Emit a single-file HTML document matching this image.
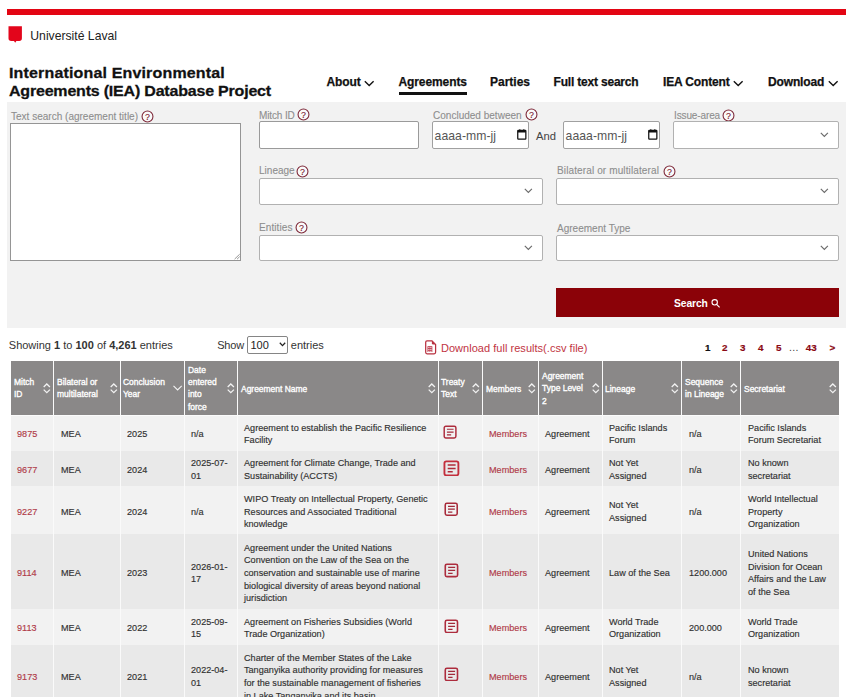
<!DOCTYPE html><html><head><meta charset="utf-8"><style>
*{margin:0;padding:0;box-sizing:border-box}
html,body{width:856px;height:697px;overflow:hidden;background:#fff}
body{position:relative;font-family:"Liberation Sans",sans-serif;color:#333}
.t{position:absolute;white-space:nowrap}
.a{position:absolute}
</style></head><body>
<div class="a" style="left:7px;top:9px;width:839px;height:6px;background:#e30513"></div>
<svg class="a" style="left:8px;top:26px" width="15" height="17" viewBox="0 0 15 17"><path d="M0.5 0.3 H13.9 V12.3 Q13.9 15.0 11.2 15.0 H8.4 L7.2 16.8 L6.0 15.0 H3.2 Q0.5 15.0 0.5 12.3 Z" fill="#e3051b"/></svg>
<div class="t" style="left:30.30px;top:29.05px;font-size:12.2px;line-height:14.64px;color:#222;font-weight:400;">Université Laval</div>
<div class="t" style="left:9.00px;top:62.56px;font-size:16px;line-height:19.2px;color:#111;font-weight:700;letter-spacing:0.16px;-webkit-text-stroke:0.3px #111;transform:scaleY(0.92);transform-origin:0 15.14px">International Environmental</div>
<div class="t" style="left:9.00px;top:81.46px;font-size:16px;line-height:19.2px;color:#111;font-weight:700;letter-spacing:-0.2px;-webkit-text-stroke:0.3px #111;transform:scaleY(0.92);transform-origin:0 15.14px">Agreements (IEA) Database Project</div>
<div class="t" style="left:326.50px;top:74.64px;font-size:12px;line-height:14.4px;color:#111;font-weight:700;-webkit-text-stroke:0.25px #111;letter-spacing:-0.1px">About</div>
<svg class="a" style="left:363.5px;top:80px" width="11" height="7" viewBox="0 0 11 7"><path d="M0.8 1.2 L5.2 5.6 L9.6 1.2" fill="none" stroke="#111" stroke-width="1.35"/></svg>
<div class="t" style="left:398.50px;top:74.64px;font-size:12px;line-height:14.4px;color:#111;font-weight:700;-webkit-text-stroke:0.25px #111;letter-spacing:-0.1px">Agreements</div>
<div class="a" style="left:398.5px;top:92px;width:68.5px;height:3px;background:#111"></div>
<div class="t" style="left:490.00px;top:74.64px;font-size:12px;line-height:14.4px;color:#111;font-weight:700;-webkit-text-stroke:0.25px #111">Parties</div>
<div class="t" style="left:553.60px;top:74.64px;font-size:12px;line-height:14.4px;color:#111;font-weight:700;-webkit-text-stroke:0.25px #111;letter-spacing:-0.2px">Full text search</div>
<div class="t" style="left:663.00px;top:74.64px;font-size:12px;line-height:14.4px;color:#111;font-weight:700;-webkit-text-stroke:0.25px #111;letter-spacing:-0.15px">IEA Content</div>
<svg class="a" style="left:732.5px;top:80px" width="11" height="7" viewBox="0 0 11 7"><path d="M0.8 1.2 L5.2 5.6 L9.6 1.2" fill="none" stroke="#111" stroke-width="1.35"/></svg>
<div class="t" style="left:768.00px;top:74.64px;font-size:12px;line-height:14.4px;color:#111;font-weight:700;-webkit-text-stroke:0.25px #111;letter-spacing:-0.15px">Download</div>
<svg class="a" style="left:827.5px;top:80px" width="11" height="7" viewBox="0 0 11 7"><path d="M0.8 1.2 L5.2 5.6 L9.6 1.2" fill="none" stroke="#111" stroke-width="1.35"/></svg>
<div class="a" style="left:7px;top:102px;width:839px;height:225.5px;background:#f2f2f2"></div>
<div class="t" style="left:10.60px;top:109.71px;font-size:11.4px;line-height:13.68px;color:#8e8e8e;font-weight:400;-webkit-text-stroke:0.12px #8e8e8e;transform:scaleX(0.88);transform-origin:0 0">Text search (agreement title)</div>
<svg class="a" style="left:140.6px;top:109.5px" width="13" height="13" viewBox="0 0 13 13"><circle cx="6.5" cy="6.5" r="5.45" fill="#fff" fill-opacity="0.6" stroke="#7f2a3a" stroke-width="1.1"/><text x="6.5" y="9.6" text-anchor="middle" font-family="Liberation Sans" font-weight="400" font-size="8.8" fill="#7a2434" stroke="#7a2434" stroke-width="0.15">?</text></svg>
<div class="a" style="left:10px;top:123px;width:231px;height:138px;background:#fff;border:1px solid #959595;border-radius:0px"></div>
<svg class="a" style="left:232px;top:252px" width="8" height="8" viewBox="0 0 8 8"><path d="M7.7 2.2 L2.6 7.1 M7.7 4.6 L5.1 7.1" stroke="#8a8a8a" stroke-width="0.9"/></svg>
<div class="t" style="left:259.40px;top:108.61px;font-size:11.4px;line-height:13.68px;color:#8e8e8e;font-weight:400;-webkit-text-stroke:0.12px #8e8e8e;transform:scaleX(0.88);transform-origin:0 0;letter-spacing:-0.15px">Mitch ID</div>
<svg class="a" style="left:297.3px;top:108.1px" width="13" height="13" viewBox="0 0 13 13"><circle cx="6.5" cy="6.5" r="5.45" fill="#fff" fill-opacity="0.6" stroke="#7f2a3a" stroke-width="1.1"/><text x="6.5" y="9.6" text-anchor="middle" font-family="Liberation Sans" font-weight="400" font-size="8.8" fill="#7a2434" stroke="#7a2434" stroke-width="0.15">?</text></svg>
<div class="a" style="left:259px;top:121px;width:159.5px;height:27.5px;background:#fff;border:1px solid #9a9a9a;border-radius:2px"></div>
<div class="t" style="left:432.60px;top:108.61px;font-size:11.4px;line-height:13.68px;color:#8e8e8e;font-weight:400;-webkit-text-stroke:0.12px #8e8e8e;transform:scaleX(0.88);transform-origin:0 0">Concluded between</div>
<svg class="a" style="left:524.9px;top:108.1px" width="13" height="13" viewBox="0 0 13 13"><circle cx="6.5" cy="6.5" r="5.45" fill="#fff" fill-opacity="0.6" stroke="#7f2a3a" stroke-width="1.1"/><text x="6.5" y="9.6" text-anchor="middle" font-family="Liberation Sans" font-weight="400" font-size="8.8" fill="#7a2434" stroke="#7a2434" stroke-width="0.15">?</text></svg>
<div class="a" style="left:432.2px;top:121px;width:97.30000000000001px;height:27.5px;background:#fff;border:1px solid #a0a0a0;border-radius:2px"></div>
<div class="t" style="left:434.60px;top:128.75px;font-size:12.2px;line-height:14.64px;color:#555;font-weight:400;letter-spacing:0.05px">aaaa-mm-jj</div>
<svg class="a" style="left:516.8px;top:129.3px" width="10" height="11" viewBox="0 0 10 11"><rect x="0.75" y="1.4" width="8.1" height="8.7" rx="0.6" fill="none" stroke="#111" stroke-width="1.25"/><rect x="0.75" y="1.4" width="8.1" height="2.1" fill="#111"/><rect x="2.2" y="0.3" width="1.2" height="1.4" fill="#111"/><rect x="6.2" y="0.3" width="1.2" height="1.4" fill="#111"/></svg>
<div class="t" style="left:536.00px;top:129.90px;font-size:11.2px;line-height:13.44px;color:#444;font-weight:400;">And</div>
<div class="a" style="left:563.1px;top:121px;width:96.89999999999998px;height:27.5px;background:#fff;border:1px solid #a0a0a0;border-radius:2px"></div>
<div class="t" style="left:565.60px;top:128.75px;font-size:12.2px;line-height:14.64px;color:#555;font-weight:400;letter-spacing:0.05px">aaaa-mm-jj</div>
<svg class="a" style="left:647.8px;top:129.3px" width="10" height="11" viewBox="0 0 10 11"><rect x="0.75" y="1.4" width="8.1" height="8.7" rx="0.6" fill="none" stroke="#111" stroke-width="1.25"/><rect x="0.75" y="1.4" width="8.1" height="2.1" fill="#111"/><rect x="2.2" y="0.3" width="1.2" height="1.4" fill="#111"/><rect x="6.2" y="0.3" width="1.2" height="1.4" fill="#111"/></svg>
<div class="t" style="left:673.50px;top:108.61px;font-size:11.4px;line-height:13.68px;color:#8e8e8e;font-weight:400;-webkit-text-stroke:0.12px #8e8e8e;transform:scaleX(0.88);transform-origin:0 0;letter-spacing:-0.15px">Issue-area</div>
<svg class="a" style="left:721.6px;top:108.7px" width="13" height="13" viewBox="0 0 13 13"><circle cx="6.5" cy="6.5" r="5.45" fill="#fff" fill-opacity="0.6" stroke="#7f2a3a" stroke-width="1.1"/><text x="6.5" y="9.6" text-anchor="middle" font-family="Liberation Sans" font-weight="400" font-size="8.8" fill="#7a2434" stroke="#7a2434" stroke-width="0.15">?</text></svg>
<div class="a" style="left:673.2px;top:121px;width:165.79999999999995px;height:27.5px;background:#fff;border:1px solid #b1b1b1;border-radius:2px"></div>
<svg class="a" style="left:820.00px;top:132.10px" width="9" height="6" viewBox="0 0 9 6"><path d="M0.8 0.9 L4.35 4.4 L7.9 0.9" fill="none" stroke="#6a6a6a" stroke-width="1.15"/></svg>
<div class="t" style="left:259.40px;top:164.11px;font-size:11.4px;line-height:13.68px;color:#8e8e8e;font-weight:400;-webkit-text-stroke:0.12px #8e8e8e;transform:scaleX(0.88);transform-origin:0 0">Lineage</div>
<svg class="a" style="left:296.2px;top:165.0px" width="13" height="13" viewBox="0 0 13 13"><circle cx="6.5" cy="6.5" r="5.45" fill="#fff" fill-opacity="0.6" stroke="#7f2a3a" stroke-width="1.1"/><text x="6.5" y="9.6" text-anchor="middle" font-family="Liberation Sans" font-weight="400" font-size="8.8" fill="#7a2434" stroke="#7a2434" stroke-width="0.15">?</text></svg>
<div class="a" style="left:259px;top:178px;width:283.5px;height:27px;background:#fff;border:1px solid #b1b1b1;border-radius:2px"></div>
<svg class="a" style="left:523.50px;top:188.10px" width="9" height="6" viewBox="0 0 9 6"><path d="M0.8 0.9 L4.35 4.4 L7.9 0.9" fill="none" stroke="#6a6a6a" stroke-width="1.15"/></svg>
<div class="t" style="left:556.50px;top:164.11px;font-size:11.4px;line-height:13.68px;color:#8e8e8e;font-weight:400;-webkit-text-stroke:0.12px #8e8e8e;transform:scaleX(0.88);transform-origin:0 0;letter-spacing:0.13px">Bilateral or multilateral</div>
<svg class="a" style="left:662.6px;top:164.7px" width="13" height="13" viewBox="0 0 13 13"><circle cx="6.5" cy="6.5" r="5.45" fill="#fff" fill-opacity="0.6" stroke="#7f2a3a" stroke-width="1.1"/><text x="6.5" y="9.6" text-anchor="middle" font-family="Liberation Sans" font-weight="400" font-size="8.8" fill="#7a2434" stroke="#7a2434" stroke-width="0.15">?</text></svg>
<div class="a" style="left:555.8px;top:178px;width:283.20000000000005px;height:27px;background:#fff;border:1px solid #b1b1b1;border-radius:2px"></div>
<svg class="a" style="left:820.00px;top:188.10px" width="9" height="6" viewBox="0 0 9 6"><path d="M0.8 0.9 L4.35 4.4 L7.9 0.9" fill="none" stroke="#6a6a6a" stroke-width="1.15"/></svg>
<div class="t" style="left:259.40px;top:221.11px;font-size:11.4px;line-height:13.68px;color:#8e8e8e;font-weight:400;-webkit-text-stroke:0.12px #8e8e8e;transform:scaleX(0.88);transform-origin:0 0;letter-spacing:0.1px">Entities</div>
<svg class="a" style="left:295.2px;top:220.9px" width="13" height="13" viewBox="0 0 13 13"><circle cx="6.5" cy="6.5" r="5.45" fill="#fff" fill-opacity="0.6" stroke="#7f2a3a" stroke-width="1.1"/><text x="6.5" y="9.6" text-anchor="middle" font-family="Liberation Sans" font-weight="400" font-size="8.8" fill="#7a2434" stroke="#7a2434" stroke-width="0.15">?</text></svg>
<div class="a" style="left:259px;top:234.5px;width:283.5px;height:26.5px;background:#fff;border:1px solid #b1b1b1;border-radius:2px"></div>
<svg class="a" style="left:523.50px;top:244.50px" width="9" height="6" viewBox="0 0 9 6"><path d="M0.8 0.9 L4.35 4.4 L7.9 0.9" fill="none" stroke="#6a6a6a" stroke-width="1.15"/></svg>
<div class="t" style="left:556.50px;top:221.51px;font-size:11.4px;line-height:13.68px;color:#8e8e8e;font-weight:400;-webkit-text-stroke:0.12px #8e8e8e;transform:scaleX(0.88);transform-origin:0 0">Agreement Type</div>
<div class="a" style="left:555.8px;top:234.5px;width:283.20000000000005px;height:26.5px;background:#fff;border:1px solid #b1b1b1;border-radius:2px"></div>
<svg class="a" style="left:820.00px;top:244.50px" width="9" height="6" viewBox="0 0 9 6"><path d="M0.8 0.9 L4.35 4.4 L7.9 0.9" fill="none" stroke="#6a6a6a" stroke-width="1.15"/></svg>
<div class="a" style="left:556px;top:288px;width:283px;height:29px;background:#8b0208"></div>
<div class="t" style="left:674.00px;top:297.75px;font-size:10.3px;line-height:12.36px;color:#fff;font-weight:700;letter-spacing:-0.1px">Search</div>
<svg class="a" style="left:710.5px;top:299px" width="10" height="9" viewBox="0 0 10 9"><circle cx="3.7" cy="3.3" r="2.7" fill="none" stroke="#fff" stroke-width="1.1"/><path d="M5.6 5.3 L8.6 8.3" stroke="#fff" stroke-width="1.2"/></svg>
<div class="t" style="left:8.80px;top:338.99px;font-size:11px;line-height:13.2px;color:#333;font-weight:400;">Showing <b>1</b> to <b>100</b> of <b>4,261</b> entries</div>
<div class="t" style="left:217.20px;top:338.59px;font-size:11px;line-height:13.2px;color:#333;font-weight:400;letter-spacing:-0.2px">Show</div>
<div class="a" style="left:247.3px;top:336.3px;width:40.3px;height:17.4px;background:#fff;border:1px solid #858585;border-radius:2px"></div>
<div class="t" style="left:250.50px;top:338.89px;font-size:11px;line-height:13.2px;color:#222;font-weight:400;">100</div>
<svg class="a" style="left:279px;top:342px" width="7" height="5" viewBox="0 0 7 5"><path d="M0.8 0.8 L3.5 3.6 L6.2 0.8" fill="none" stroke="#222" stroke-width="1.3"/></svg>
<div class="t" style="left:290.80px;top:338.59px;font-size:11px;line-height:13.2px;color:#333;font-weight:400;">entries</div>
<svg class="a" style="left:424.8px;top:339.8px" width="12" height="15" viewBox="0 0 12 15"><path d="M2 0.8 H7 L10.6 4.4 V12.3 Q10.6 13.8 9.1 13.8 H2 Q0.7 13.8 0.7 12.3 V2.2 Q0.7 0.8 2 0.8 Z" fill="none" stroke="#b8303f" stroke-width="1.25"/><path d="M6.9 0.8 V3.2 Q6.9 4.4 8.1 4.4 H10.6 Z" fill="#b8303f"/><path d="M2.9 6.3 V12 M4.9 6.3 V12 M6.9 6.3 V12 M2.9 6.6 H6.9 M2.9 8.5 H6.9 M2.9 10.4 H6.9" stroke="#c04050" stroke-width="0.9"/></svg>
<div class="t" style="left:441.00px;top:341.79px;font-size:11px;line-height:13.2px;color:#c1343f;font-weight:400;letter-spacing:0.03px">Download full results(.csv file)</div>
<div class="t" style="left:705.00px;top:342.22px;font-size:9.8px;line-height:11.76px;color:#111;font-weight:700;-webkit-text-stroke:0.2px #111">1</div>
<div class="t" style="left:722.00px;top:342.22px;font-size:9.8px;line-height:11.76px;color:#8b0a14;font-weight:700;-webkit-text-stroke:0.2px #8b0a14">2</div>
<div class="t" style="left:740.00px;top:342.22px;font-size:9.8px;line-height:11.76px;color:#8b0a14;font-weight:700;-webkit-text-stroke:0.2px #8b0a14">3</div>
<div class="t" style="left:758.00px;top:342.22px;font-size:9.8px;line-height:11.76px;color:#8b0a14;font-weight:700;-webkit-text-stroke:0.2px #8b0a14">4</div>
<div class="t" style="left:776.00px;top:342.22px;font-size:9.8px;line-height:11.76px;color:#8b0a14;font-weight:700;-webkit-text-stroke:0.2px #8b0a14">5</div>
<div class="t" style="left:805.80px;top:342.22px;font-size:9.8px;line-height:11.76px;color:#8b0a14;font-weight:700;-webkit-text-stroke:0.2px #8b0a14">43</div>
<div class="t" style="left:829.60px;top:342.22px;font-size:9.8px;line-height:11.76px;color:#8b0a14;font-weight:700;-webkit-text-stroke:0.2px #8b0a14">&gt;</div>
<div class="t" style="left:789.00px;top:341.36px;font-size:10.5px;line-height:12.6px;color:#444;font-weight:400;letter-spacing:0.3px">...</div>
<div class="a" style="left:10.6px;top:361px;width:828.4px;height:53.60000000000002px;background:#8a8888"></div>
<div class="a" style="left:10.6px;top:414.5px;width:828.4px;height:36.30000000000001px;background:#f2f2f2"></div>
<div class="a" style="left:10.6px;top:450.8px;width:828.4px;height:35.25px;background:#e9e9e9"></div>
<div class="a" style="left:10.6px;top:486.05px;width:828.4px;height:48.349999999999966px;background:#f2f2f2"></div>
<div class="a" style="left:10.6px;top:534.4px;width:828.4px;height:74.60000000000002px;background:#e9e9e9"></div>
<div class="a" style="left:10.6px;top:609px;width:828.4px;height:35.799999999999955px;background:#f2f2f2"></div>
<div class="a" style="left:10.6px;top:644.8px;width:828.4px;height:61.200000000000045px;background:#e9e9e9"></div>
<div class="a" style="left:10.6px;top:414.8px;width:828.4px;height:1px;background:#fbfbfb"></div>
<div class="a" style="left:53.2px;top:361px;width:1px;height:339px;background:#fafafa"></div>
<div class="a" style="left:119.60000000000001px;top:361px;width:1px;height:339px;background:#fafafa"></div>
<div class="a" style="left:184.1px;top:361px;width:1px;height:339px;background:#fafafa"></div>
<div class="a" style="left:237.1px;top:361px;width:1px;height:339px;background:#fafafa"></div>
<div class="a" style="left:437.7px;top:361px;width:1px;height:339px;background:#fafafa"></div>
<div class="a" style="left:482.0px;top:361px;width:1px;height:339px;background:#fafafa"></div>
<div class="a" style="left:538.0px;top:361px;width:1px;height:339px;background:#fafafa"></div>
<div class="a" style="left:601.6px;top:361px;width:1px;height:339px;background:#fafafa"></div>
<div class="a" style="left:681.2px;top:361px;width:1px;height:339px;background:#fafafa"></div>
<div class="a" style="left:740.4000000000001px;top:361px;width:1px;height:339px;background:#fafafa"></div>
<div class="t" style="left:13.80px;top:376.20px;font-size:9.1px;line-height:12.2px;color:#fff;font-weight:400;transform:scaleX(0.93);transform-origin:0 0;-webkit-text-stroke:0.35px #fff">Mitch<br>ID</div>
<svg class="a" style="left:43.2px;top:382.8px" width="8" height="11" viewBox="0 0 8 11"><path d="M0.7 4.0 L3.8 1.0 L6.9 4.0 M0.7 6.6 L3.8 9.6 L6.9 6.6" fill="none" stroke="#f2f2f2" stroke-width="1.3"/></svg>
<div class="t" style="left:56.70px;top:376.20px;font-size:9.1px;line-height:12.2px;color:#fff;font-weight:400;transform:scaleX(0.93);transform-origin:0 0;-webkit-text-stroke:0.35px #fff">Bilateral or<br>multilateral</div>
<svg class="a" style="left:109.60000000000001px;top:382.8px" width="8" height="11" viewBox="0 0 8 11"><path d="M0.7 4.0 L3.8 1.0 L6.9 4.0 M0.7 6.6 L3.8 9.6 L6.9 6.6" fill="none" stroke="#f2f2f2" stroke-width="1.3"/></svg>
<div class="t" style="left:123.10px;top:376.20px;font-size:9.1px;line-height:12.2px;color:#fff;font-weight:400;transform:scaleX(0.93);transform-origin:0 0;-webkit-text-stroke:0.35px #fff">Conclusion<br>Year</div>
<svg class="a" style="left:173.1px;top:385.4px" width="10" height="6" viewBox="0 0 10 6"><path d="M0.5 0.8 L4.6 4.9 L8.7 0.8" fill="none" stroke="#f4f4f4" stroke-width="1.1"/></svg>
<div class="t" style="left:187.60px;top:364.00px;font-size:9.1px;line-height:12.2px;color:#fff;font-weight:400;transform:scaleX(0.93);transform-origin:0 0;-webkit-text-stroke:0.35px #fff">Date<br>entered<br>into<br>force</div>
<svg class="a" style="left:227.1px;top:382.8px" width="8" height="11" viewBox="0 0 8 11"><path d="M0.7 4.0 L3.8 1.0 L6.9 4.0 M0.7 6.6 L3.8 9.6 L6.9 6.6" fill="none" stroke="#f2f2f2" stroke-width="1.3"/></svg>
<div class="t" style="left:240.60px;top:383.10px;font-size:9.1px;line-height:12.2px;color:#fff;font-weight:400;transform:scaleX(0.93);transform-origin:0 0;-webkit-text-stroke:0.35px #fff">Agreement Name</div>
<svg class="a" style="left:427.7px;top:382.8px" width="8" height="11" viewBox="0 0 8 11"><path d="M0.7 4.0 L3.8 1.0 L6.9 4.0 M0.7 6.6 L3.8 9.6 L6.9 6.6" fill="none" stroke="#f2f2f2" stroke-width="1.3"/></svg>
<div class="t" style="left:441.20px;top:376.20px;font-size:9.1px;line-height:12.2px;color:#fff;font-weight:400;transform:scaleX(0.93);transform-origin:0 0;-webkit-text-stroke:0.35px #fff">Treaty<br>Text</div>
<svg class="a" style="left:472.0px;top:382.8px" width="8" height="11" viewBox="0 0 8 11"><path d="M0.7 4.0 L3.8 1.0 L6.9 4.0 M0.7 6.6 L3.8 9.6 L6.9 6.6" fill="none" stroke="#f2f2f2" stroke-width="1.3"/></svg>
<div class="t" style="left:485.50px;top:383.10px;font-size:9.1px;line-height:12.2px;color:#fff;font-weight:400;transform:scaleX(0.93);transform-origin:0 0;-webkit-text-stroke:0.35px #fff">Members</div>
<svg class="a" style="left:528.0px;top:382.8px" width="8" height="11" viewBox="0 0 8 11"><path d="M0.7 4.0 L3.8 1.0 L6.9 4.0 M0.7 6.6 L3.8 9.6 L6.9 6.6" fill="none" stroke="#f2f2f2" stroke-width="1.3"/></svg>
<div class="t" style="left:541.50px;top:370.10px;font-size:9.1px;line-height:12.2px;color:#fff;font-weight:400;transform:scaleX(0.93);transform-origin:0 0;-webkit-text-stroke:0.35px #fff">Agreement<br>Type Level<br>2</div>
<svg class="a" style="left:591.6px;top:382.8px" width="8" height="11" viewBox="0 0 8 11"><path d="M0.7 4.0 L3.8 1.0 L6.9 4.0 M0.7 6.6 L3.8 9.6 L6.9 6.6" fill="none" stroke="#f2f2f2" stroke-width="1.3"/></svg>
<div class="t" style="left:605.10px;top:383.10px;font-size:9.1px;line-height:12.2px;color:#fff;font-weight:400;transform:scaleX(0.93);transform-origin:0 0;-webkit-text-stroke:0.35px #fff">Lineage</div>
<svg class="a" style="left:671.2px;top:382.8px" width="8" height="11" viewBox="0 0 8 11"><path d="M0.7 4.0 L3.8 1.0 L6.9 4.0 M0.7 6.6 L3.8 9.6 L6.9 6.6" fill="none" stroke="#f2f2f2" stroke-width="1.3"/></svg>
<div class="t" style="left:684.70px;top:376.20px;font-size:9.1px;line-height:12.2px;color:#fff;font-weight:400;transform:scaleX(0.93);transform-origin:0 0;-webkit-text-stroke:0.35px #fff">Sequence<br>in Lineage</div>
<svg class="a" style="left:730.4000000000001px;top:382.8px" width="8" height="11" viewBox="0 0 8 11"><path d="M0.7 4.0 L3.8 1.0 L6.9 4.0 M0.7 6.6 L3.8 9.6 L6.9 6.6" fill="none" stroke="#f2f2f2" stroke-width="1.3"/></svg>
<div class="t" style="left:743.90px;top:383.10px;font-size:9.1px;line-height:12.2px;color:#fff;font-weight:400;transform:scaleX(0.93);transform-origin:0 0;-webkit-text-stroke:0.35px #fff">Secretariat</div>
<svg class="a" style="left:828.7px;top:382.8px" width="8" height="11" viewBox="0 0 8 11"><path d="M0.7 4.0 L3.8 1.0 L6.9 4.0 M0.7 6.6 L3.8 9.6 L6.9 6.6" fill="none" stroke="#f2f2f2" stroke-width="1.3"/></svg>
<div class="t" style="left:16.50px;top:427.95px;font-size:9.8px;line-height:12.6px;color:#b03a48;font-weight:400;transform:scaleX(0.93);transform-origin:0 0;-webkit-text-stroke:0.15px currentColor">9875</div>
<div class="t" style="left:61.10px;top:427.95px;font-size:9.8px;line-height:12.6px;color:#303030;font-weight:400;transform:scaleX(0.93);transform-origin:0 0;-webkit-text-stroke:0.15px currentColor">MEA</div>
<div class="t" style="left:127.40px;top:427.95px;font-size:9.8px;line-height:12.6px;color:#303030;font-weight:400;transform:scaleX(0.93);transform-origin:0 0;-webkit-text-stroke:0.15px currentColor">2025</div>
<div class="t" style="left:191.10px;top:427.95px;font-size:9.8px;line-height:12.6px;color:#303030;font-weight:400;transform:scaleX(0.93);transform-origin:0 0;-webkit-text-stroke:0.15px currentColor">n/a</div>
<div class="t" style="left:244.10px;top:421.65px;font-size:9.8px;line-height:12.6px;color:#303030;font-weight:400;transform:scaleX(0.93);transform-origin:0 0;-webkit-text-stroke:0.15px currentColor">Agreement to establish the Pacific Resilience<br>Facility</div>
<svg class="a" style="left:443.25px;top:425.35px" width="14.11" height="14.11" viewBox="0 0 14 14"><rect x="1.2" y="1.2" width="11.6" height="11.6" rx="1.6" fill="none" stroke="#ad2c3d" stroke-width="1.45"/><path d="M3.9 4.2 H10.5 M3.9 7.0 H10.5 M3.9 9.8 H8.1" stroke="#a32a3a" stroke-width="1.2"/></svg>
<div class="t" style="left:489.00px;top:427.95px;font-size:9.8px;line-height:12.6px;color:#b03a48;font-weight:400;transform:scaleX(0.93);transform-origin:0 0;-webkit-text-stroke:0.15px currentColor">Members</div>
<div class="t" style="left:545.00px;top:427.95px;font-size:9.8px;line-height:12.6px;color:#303030;font-weight:400;transform:scaleX(0.93);transform-origin:0 0;-webkit-text-stroke:0.15px currentColor">Agreement</div>
<div class="t" style="left:608.60px;top:421.65px;font-size:9.8px;line-height:12.6px;color:#303030;font-weight:400;transform:scaleX(0.93);transform-origin:0 0;-webkit-text-stroke:0.15px currentColor">Pacific Islands<br>Forum</div>
<div class="t" style="left:689.20px;top:427.95px;font-size:9.8px;line-height:12.6px;color:#303030;font-weight:400;transform:scaleX(0.93);transform-origin:0 0;-webkit-text-stroke:0.15px currentColor">n/a</div>
<div class="t" style="left:747.60px;top:421.65px;font-size:9.8px;line-height:12.6px;color:#303030;font-weight:400;transform:scaleX(0.93);transform-origin:0 0;-webkit-text-stroke:0.15px currentColor">Pacific Islands<br>Forum Secretariat</div>
<div class="t" style="left:16.50px;top:463.73px;font-size:9.8px;line-height:12.6px;color:#b03a48;font-weight:400;transform:scaleX(0.93);transform-origin:0 0;-webkit-text-stroke:0.15px currentColor">9677</div>
<div class="t" style="left:61.10px;top:463.73px;font-size:9.8px;line-height:12.6px;color:#303030;font-weight:400;transform:scaleX(0.93);transform-origin:0 0;-webkit-text-stroke:0.15px currentColor">MEA</div>
<div class="t" style="left:127.40px;top:463.73px;font-size:9.8px;line-height:12.6px;color:#303030;font-weight:400;transform:scaleX(0.93);transform-origin:0 0;-webkit-text-stroke:0.15px currentColor">2024</div>
<div class="t" style="left:191.10px;top:457.43px;font-size:9.8px;line-height:12.6px;color:#303030;font-weight:400;transform:scaleX(0.93);transform-origin:0 0;-webkit-text-stroke:0.15px currentColor">2025-07-<br>01</div>
<div class="t" style="left:244.10px;top:457.43px;font-size:9.8px;line-height:12.6px;color:#303030;font-weight:400;transform:scaleX(0.93);transform-origin:0 0;-webkit-text-stroke:0.15px currentColor">Agreement for Climate Change, Trade and<br>Sustainability (ACCTS)</div>
<svg class="a" style="left:443.18px;top:459.58px" width="16.84" height="16.84" viewBox="0 0 14 14"><rect x="1.2" y="1.2" width="11.6" height="11.6" rx="1.6" fill="none" stroke="#c32e3c" stroke-width="1.55"/><path d="M3.9 4.2 H10.5 M3.9 7.0 H10.5 M3.9 9.8 H8.1" stroke="#b02a38" stroke-width="1.2"/></svg>
<div class="t" style="left:489.00px;top:463.73px;font-size:9.8px;line-height:12.6px;color:#b03a48;font-weight:400;transform:scaleX(0.93);transform-origin:0 0;-webkit-text-stroke:0.15px currentColor">Members</div>
<div class="t" style="left:545.00px;top:463.73px;font-size:9.8px;line-height:12.6px;color:#303030;font-weight:400;transform:scaleX(0.93);transform-origin:0 0;-webkit-text-stroke:0.15px currentColor">Agreement</div>
<div class="t" style="left:608.60px;top:457.43px;font-size:9.8px;line-height:12.6px;color:#303030;font-weight:400;transform:scaleX(0.93);transform-origin:0 0;-webkit-text-stroke:0.15px currentColor">Not Yet<br>Assigned</div>
<div class="t" style="left:689.20px;top:463.73px;font-size:9.8px;line-height:12.6px;color:#303030;font-weight:400;transform:scaleX(0.93);transform-origin:0 0;-webkit-text-stroke:0.15px currentColor">n/a</div>
<div class="t" style="left:747.60px;top:457.43px;font-size:9.8px;line-height:12.6px;color:#303030;font-weight:400;transform:scaleX(0.93);transform-origin:0 0;-webkit-text-stroke:0.15px currentColor">No known<br>secretariat</div>
<div class="t" style="left:16.50px;top:505.53px;font-size:9.8px;line-height:12.6px;color:#b03a48;font-weight:400;transform:scaleX(0.93);transform-origin:0 0;-webkit-text-stroke:0.15px currentColor">9227</div>
<div class="t" style="left:61.10px;top:505.53px;font-size:9.8px;line-height:12.6px;color:#303030;font-weight:400;transform:scaleX(0.93);transform-origin:0 0;-webkit-text-stroke:0.15px currentColor">MEA</div>
<div class="t" style="left:127.40px;top:505.53px;font-size:9.8px;line-height:12.6px;color:#303030;font-weight:400;transform:scaleX(0.93);transform-origin:0 0;-webkit-text-stroke:0.15px currentColor">2024</div>
<div class="t" style="left:191.10px;top:505.53px;font-size:9.8px;line-height:12.6px;color:#303030;font-weight:400;transform:scaleX(0.93);transform-origin:0 0;-webkit-text-stroke:0.15px currentColor">n/a</div>
<div class="t" style="left:244.10px;top:492.93px;font-size:9.8px;line-height:12.6px;color:#303030;font-weight:400;transform:scaleX(0.93);transform-origin:0 0;-webkit-text-stroke:0.15px currentColor">WIPO Treaty on Intellectual Property, Genetic<br>Resources and Associated Traditional<br>knowledge</div>
<svg class="a" style="left:444.28px;top:502.28px" width="14.44" height="14.44" viewBox="0 0 14 14"><rect x="1.2" y="1.2" width="11.6" height="11.6" rx="1.6" fill="none" stroke="#a82a3a" stroke-width="1.5"/><path d="M3.9 4.2 H10.5 M3.9 7.0 H10.5 M3.9 9.8 H8.1" stroke="#9e2838" stroke-width="1.2"/></svg>
<div class="t" style="left:489.00px;top:505.53px;font-size:9.8px;line-height:12.6px;color:#b03a48;font-weight:400;transform:scaleX(0.93);transform-origin:0 0;-webkit-text-stroke:0.15px currentColor">Members</div>
<div class="t" style="left:545.00px;top:505.53px;font-size:9.8px;line-height:12.6px;color:#303030;font-weight:400;transform:scaleX(0.93);transform-origin:0 0;-webkit-text-stroke:0.15px currentColor">Agreement</div>
<div class="t" style="left:608.60px;top:499.23px;font-size:9.8px;line-height:12.6px;color:#303030;font-weight:400;transform:scaleX(0.93);transform-origin:0 0;-webkit-text-stroke:0.15px currentColor">Not Yet<br>Assigned</div>
<div class="t" style="left:689.20px;top:505.53px;font-size:9.8px;line-height:12.6px;color:#303030;font-weight:400;transform:scaleX(0.93);transform-origin:0 0;-webkit-text-stroke:0.15px currentColor">n/a</div>
<div class="t" style="left:747.60px;top:492.93px;font-size:9.8px;line-height:12.6px;color:#303030;font-weight:400;transform:scaleX(0.93);transform-origin:0 0;-webkit-text-stroke:0.15px currentColor">World Intellectual<br>Property<br>Organization</div>
<div class="t" style="left:16.50px;top:567.00px;font-size:9.8px;line-height:12.6px;color:#b03a48;font-weight:400;transform:scaleX(0.93);transform-origin:0 0;-webkit-text-stroke:0.15px currentColor">9114</div>
<div class="t" style="left:61.10px;top:567.00px;font-size:9.8px;line-height:12.6px;color:#303030;font-weight:400;transform:scaleX(0.93);transform-origin:0 0;-webkit-text-stroke:0.15px currentColor">MEA</div>
<div class="t" style="left:127.40px;top:567.00px;font-size:9.8px;line-height:12.6px;color:#303030;font-weight:400;transform:scaleX(0.93);transform-origin:0 0;-webkit-text-stroke:0.15px currentColor">2023</div>
<div class="t" style="left:191.10px;top:560.70px;font-size:9.8px;line-height:12.6px;color:#303030;font-weight:400;transform:scaleX(0.93);transform-origin:0 0;-webkit-text-stroke:0.15px currentColor">2026-01-<br>17</div>
<div class="t" style="left:244.10px;top:541.80px;font-size:9.8px;line-height:12.6px;color:#303030;font-weight:400;transform:scaleX(0.93);transform-origin:0 0;-webkit-text-stroke:0.15px currentColor">Agreement under the United Nations<br>Convention on the Law of the Sea on the<br>conservation and sustainable use of marine<br>biological diversity of areas beyond national<br>jurisdiction</div>
<svg class="a" style="left:444.16px;top:563.36px" width="14.88" height="14.88" viewBox="0 0 14 14"><rect x="1.2" y="1.2" width="11.6" height="11.6" rx="1.6" fill="none" stroke="#ad2c3d" stroke-width="1.5"/><path d="M3.9 4.2 H10.5 M3.9 7.0 H10.5 M3.9 9.8 H8.1" stroke="#a32a3a" stroke-width="1.2"/></svg>
<div class="t" style="left:489.00px;top:567.00px;font-size:9.8px;line-height:12.6px;color:#b03a48;font-weight:400;transform:scaleX(0.93);transform-origin:0 0;-webkit-text-stroke:0.15px currentColor">Members</div>
<div class="t" style="left:545.00px;top:567.00px;font-size:9.8px;line-height:12.6px;color:#303030;font-weight:400;transform:scaleX(0.93);transform-origin:0 0;-webkit-text-stroke:0.15px currentColor">Agreement</div>
<div class="t" style="left:608.60px;top:567.00px;font-size:9.8px;line-height:12.6px;color:#303030;font-weight:400;transform:scaleX(0.93);transform-origin:0 0;-webkit-text-stroke:0.15px currentColor">Law of the Sea</div>
<div class="t" style="left:689.20px;top:567.00px;font-size:9.8px;line-height:12.6px;color:#303030;font-weight:400;transform:scaleX(0.93);transform-origin:0 0;-webkit-text-stroke:0.15px currentColor">1200.000</div>
<div class="t" style="left:747.60px;top:548.10px;font-size:9.8px;line-height:12.6px;color:#303030;font-weight:400;transform:scaleX(0.93);transform-origin:0 0;-webkit-text-stroke:0.15px currentColor">United Nations<br>Division for Ocean<br>Affairs and the Law<br>of the Sea</div>
<div class="t" style="left:16.50px;top:622.20px;font-size:9.8px;line-height:12.6px;color:#b03a48;font-weight:400;transform:scaleX(0.93);transform-origin:0 0;-webkit-text-stroke:0.15px currentColor">9113</div>
<div class="t" style="left:61.10px;top:622.20px;font-size:9.8px;line-height:12.6px;color:#303030;font-weight:400;transform:scaleX(0.93);transform-origin:0 0;-webkit-text-stroke:0.15px currentColor">MEA</div>
<div class="t" style="left:127.40px;top:622.20px;font-size:9.8px;line-height:12.6px;color:#303030;font-weight:400;transform:scaleX(0.93);transform-origin:0 0;-webkit-text-stroke:0.15px currentColor">2022</div>
<div class="t" style="left:191.10px;top:615.90px;font-size:9.8px;line-height:12.6px;color:#303030;font-weight:400;transform:scaleX(0.93);transform-origin:0 0;-webkit-text-stroke:0.15px currentColor">2025-09-<br>15</div>
<div class="t" style="left:244.10px;top:615.90px;font-size:9.8px;line-height:12.6px;color:#303030;font-weight:400;transform:scaleX(0.93);transform-origin:0 0;-webkit-text-stroke:0.15px currentColor">Agreement on Fisheries Subsidies (World<br>Trade Organization)</div>
<svg class="a" style="left:444.12px;top:618.52px" width="14.77" height="14.77" viewBox="0 0 14 14"><rect x="1.2" y="1.2" width="11.6" height="11.6" rx="1.6" fill="none" stroke="#ad2c3d" stroke-width="1.5"/><path d="M3.9 4.2 H10.5 M3.9 7.0 H10.5 M3.9 9.8 H8.1" stroke="#a32a3a" stroke-width="1.2"/></svg>
<div class="t" style="left:489.00px;top:622.20px;font-size:9.8px;line-height:12.6px;color:#b03a48;font-weight:400;transform:scaleX(0.93);transform-origin:0 0;-webkit-text-stroke:0.15px currentColor">Members</div>
<div class="t" style="left:545.00px;top:622.20px;font-size:9.8px;line-height:12.6px;color:#303030;font-weight:400;transform:scaleX(0.93);transform-origin:0 0;-webkit-text-stroke:0.15px currentColor">Agreement</div>
<div class="t" style="left:608.60px;top:615.90px;font-size:9.8px;line-height:12.6px;color:#303030;font-weight:400;transform:scaleX(0.93);transform-origin:0 0;-webkit-text-stroke:0.15px currentColor">World Trade<br>Organization</div>
<div class="t" style="left:689.20px;top:622.20px;font-size:9.8px;line-height:12.6px;color:#303030;font-weight:400;transform:scaleX(0.93);transform-origin:0 0;-webkit-text-stroke:0.15px currentColor">200.000</div>
<div class="t" style="left:747.60px;top:615.90px;font-size:9.8px;line-height:12.6px;color:#303030;font-weight:400;transform:scaleX(0.93);transform-origin:0 0;-webkit-text-stroke:0.15px currentColor">World Trade<br>Organization</div>
<div class="t" style="left:16.50px;top:670.70px;font-size:9.8px;line-height:12.6px;color:#b03a48;font-weight:400;transform:scaleX(0.93);transform-origin:0 0;-webkit-text-stroke:0.15px currentColor">9173</div>
<div class="t" style="left:61.10px;top:670.70px;font-size:9.8px;line-height:12.6px;color:#303030;font-weight:400;transform:scaleX(0.93);transform-origin:0 0;-webkit-text-stroke:0.15px currentColor">MEA</div>
<div class="t" style="left:127.40px;top:670.70px;font-size:9.8px;line-height:12.6px;color:#303030;font-weight:400;transform:scaleX(0.93);transform-origin:0 0;-webkit-text-stroke:0.15px currentColor">2021</div>
<div class="t" style="left:191.10px;top:664.40px;font-size:9.8px;line-height:12.6px;color:#303030;font-weight:400;transform:scaleX(0.93);transform-origin:0 0;-webkit-text-stroke:0.15px currentColor">2022-04-<br>01</div>
<div class="t" style="left:244.10px;top:651.80px;font-size:9.8px;line-height:12.6px;color:#303030;font-weight:400;transform:scaleX(0.93);transform-origin:0 0;-webkit-text-stroke:0.15px currentColor">Charter of the Member States of the Lake<br>Tanganyika authority providing for measures<br>for the sustainable management of fisheries<br>in Lake Tanganyika and its basin</div>
<svg class="a" style="left:444.22px;top:666.52px" width="14.77" height="14.77" viewBox="0 0 14 14"><rect x="1.2" y="1.2" width="11.6" height="11.6" rx="1.6" fill="none" stroke="#ad2c3d" stroke-width="1.5"/><path d="M3.9 4.2 H10.5 M3.9 7.0 H10.5 M3.9 9.8 H8.1" stroke="#a32a3a" stroke-width="1.2"/></svg>
<div class="t" style="left:489.00px;top:670.70px;font-size:9.8px;line-height:12.6px;color:#b03a48;font-weight:400;transform:scaleX(0.93);transform-origin:0 0;-webkit-text-stroke:0.15px currentColor">Members</div>
<div class="t" style="left:545.00px;top:670.70px;font-size:9.8px;line-height:12.6px;color:#303030;font-weight:400;transform:scaleX(0.93);transform-origin:0 0;-webkit-text-stroke:0.15px currentColor">Agreement</div>
<div class="t" style="left:608.60px;top:664.40px;font-size:9.8px;line-height:12.6px;color:#303030;font-weight:400;transform:scaleX(0.93);transform-origin:0 0;-webkit-text-stroke:0.15px currentColor">Not Yet<br>Assigned</div>
<div class="t" style="left:689.20px;top:670.70px;font-size:9.8px;line-height:12.6px;color:#303030;font-weight:400;transform:scaleX(0.93);transform-origin:0 0;-webkit-text-stroke:0.15px currentColor">n/a</div>
<div class="t" style="left:747.60px;top:664.40px;font-size:9.8px;line-height:12.6px;color:#303030;font-weight:400;transform:scaleX(0.93);transform-origin:0 0;-webkit-text-stroke:0.15px currentColor">No known<br>secretariat</div>
</body></html>
